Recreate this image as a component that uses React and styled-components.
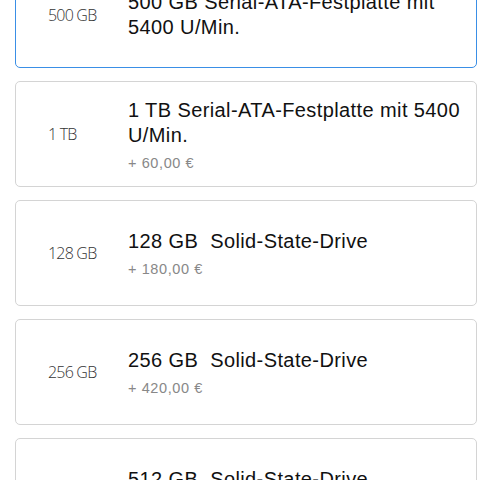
import React from 'react'
import styled, { createGlobalStyle } from 'styled-components'

const Global = createGlobalStyle`
    html, body {
        margin: 0;
        padding: 0;
        background: #fff;
        overflow: hidden;
    }
`

const List = styled.div`
    display: flex;
    flex-direction: column;
    gap: 13px;
    padding: 0 3px 0 15px;
    margin-top: -38px;
`

const Card = styled.div`
    display: flex;
    align-items: center;
    min-height: 106px;
    box-sizing: border-box;
    padding: 0 8px 0 32px;
    border: 1.5px solid ${(p) => (p.selected ? '#3a8fe6' : '#d4d4d4')};
    border-radius: 5px;
    background: #fff;
`

const Size = styled.div`
    width: 80px;
    flex-shrink: 0;
    font-family: 'Open Sans', sans-serif;
    font-size: 16px;
    font-weight: 300;
    letter-spacing: -0.8px;
    color: #333;
`

const Info = styled.div`
    display: flex;
    flex-direction: column;
    gap: 7px;
`

const Title = styled.div`
    font-family: 'Liberation Sans', Arial, sans-serif;
    font-size: 20px;
    letter-spacing: 0.4px;
    line-height: 25px;
    color: #111;
    white-space: pre-wrap;
`

const Price = styled.div`
    font-family: 'Liberation Sans', Arial, sans-serif;
    font-size: 14.5px;
    letter-spacing: 0.6px;
    color: #888;
`

const options = [
    { size: '500 GB', title: '500 GB Serial-ATA-Festplatte mit 5400 U/Min.', selected: true },
    { size: '1 TB', title: '1 TB Serial-ATA-Festplatte mit 5400 U/Min.', price: '+ 60,00 €' },
    { size: '128 GB', title: '128 GB  Solid-State-Drive', price: '+ 180,00 €' },
    { size: '256 GB', title: '256 GB  Solid-State-Drive', price: '+ 420,00 €' },
    { size: '512 GB', title: '512 GB  Solid-State-Drive', price: '+ 660,00 €' },
]

const App = () => {
    return (
        <>
            <Global />
            <List>
                {options.map((o) => (
                    <Card key={o.size} selected={o.selected}>
                        <Size>{o.size}</Size>
                        <Info>
                            <Title>{o.title}</Title>
                            {o.price && <Price>{o.price}</Price>}
                        </Info>
                    </Card>
                ))}
            </List>
        </>
    )
}

export default App
